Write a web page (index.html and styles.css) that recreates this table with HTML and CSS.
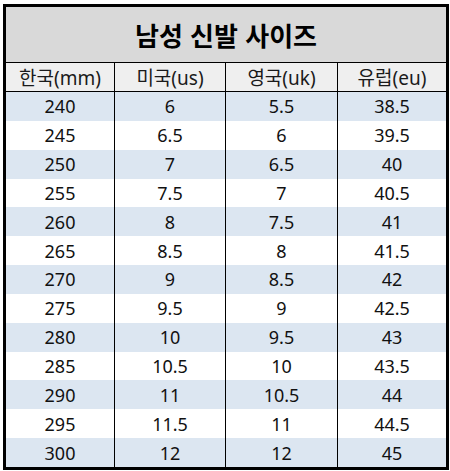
FILE: index.html
```html
<!DOCTYPE html>
<html lang="ko">
<head>
<meta charset="utf-8">
<title>남성 신발 사이즈</title>
<link rel="stylesheet" href="styles.css">
</head>
<body>
<div class="sheet">
  <div class="title">남성 신발 사이즈</div>
  <div class="row head">
    <div class="cell">한국(mm)</div>
    <div class="cell">미국(us)</div>
    <div class="cell">영국(uk)</div>
    <div class="cell">유럽(eu)</div>
  </div>
  <div class="body">
    <div class="row blue"><div class="cell">240</div><div class="cell">6</div><div class="cell">5.5</div><div class="cell">38.5</div></div>
    <div class="row"><div class="cell">245</div><div class="cell">6.5</div><div class="cell">6</div><div class="cell">39.5</div></div>
    <div class="row blue"><div class="cell">250</div><div class="cell">7</div><div class="cell">6.5</div><div class="cell">40</div></div>
    <div class="row"><div class="cell">255</div><div class="cell">7.5</div><div class="cell">7</div><div class="cell">40.5</div></div>
    <div class="row blue"><div class="cell">260</div><div class="cell">8</div><div class="cell">7.5</div><div class="cell">41</div></div>
    <div class="row"><div class="cell">265</div><div class="cell">8.5</div><div class="cell">8</div><div class="cell">41.5</div></div>
    <div class="row blue"><div class="cell">270</div><div class="cell">9</div><div class="cell">8.5</div><div class="cell">42</div></div>
    <div class="row"><div class="cell">275</div><div class="cell">9.5</div><div class="cell">9</div><div class="cell">42.5</div></div>
    <div class="row blue"><div class="cell">280</div><div class="cell">10</div><div class="cell">9.5</div><div class="cell">43</div></div>
    <div class="row"><div class="cell">285</div><div class="cell">10.5</div><div class="cell">10</div><div class="cell">43.5</div></div>
    <div class="row blue"><div class="cell">290</div><div class="cell">11</div><div class="cell">10.5</div><div class="cell">44</div></div>
    <div class="row"><div class="cell">295</div><div class="cell">11.5</div><div class="cell">11</div><div class="cell">44.5</div></div>
    <div class="row blue"><div class="cell">300</div><div class="cell">12</div><div class="cell">12</div><div class="cell">45</div></div>
  </div>
</div>
</body>
</html>
```

FILE: styles.css
```css
html, body {
  margin: 0;
  padding: 0;
  background: #ffffff;
}

body {
  font-family: "Noto Sans", "Noto Sans CJK KR", sans-serif;
  color: #111111;
  padding: 4px 0 0 3px;
}

.sheet {
  box-sizing: border-box;
  width: 446px;
  height: 466px;
  border: 3px solid #000000;
  display: flex;
  flex-direction: column;
  background: #ffffff;
}

.title {
  height: 55px;
  border-bottom: 1px solid #000000;
  background: #d9d9d9;
  display: flex;
  align-items: center;
  justify-content: center;
  font-family: "Noto Sans CJK KR", sans-serif;
  font-weight: 700;
  font-size: 26px;
  color: #000000;
}

.row {
  display: grid;
  grid-template-columns: 109px 111px 112px 108px;
}

.head {
  height: 28px;
  border-bottom: 1px solid #000000;
  background: #efefef;
}

.head .cell {
  font-size: 19px;
  color: #1a1a1a;
}

.body {
  flex: 1;
  display: flex;
  flex-direction: column;
}

.body .row {
  flex: 1;
}

.blue {
  background: #dce6f1;
}

.cell {
  display: flex;
  align-items: center;
  justify-content: center;
  font-size: 18px;
  border-right: 1px solid #000000;
}

.cell:last-child {
  border-right: none;
}
```
